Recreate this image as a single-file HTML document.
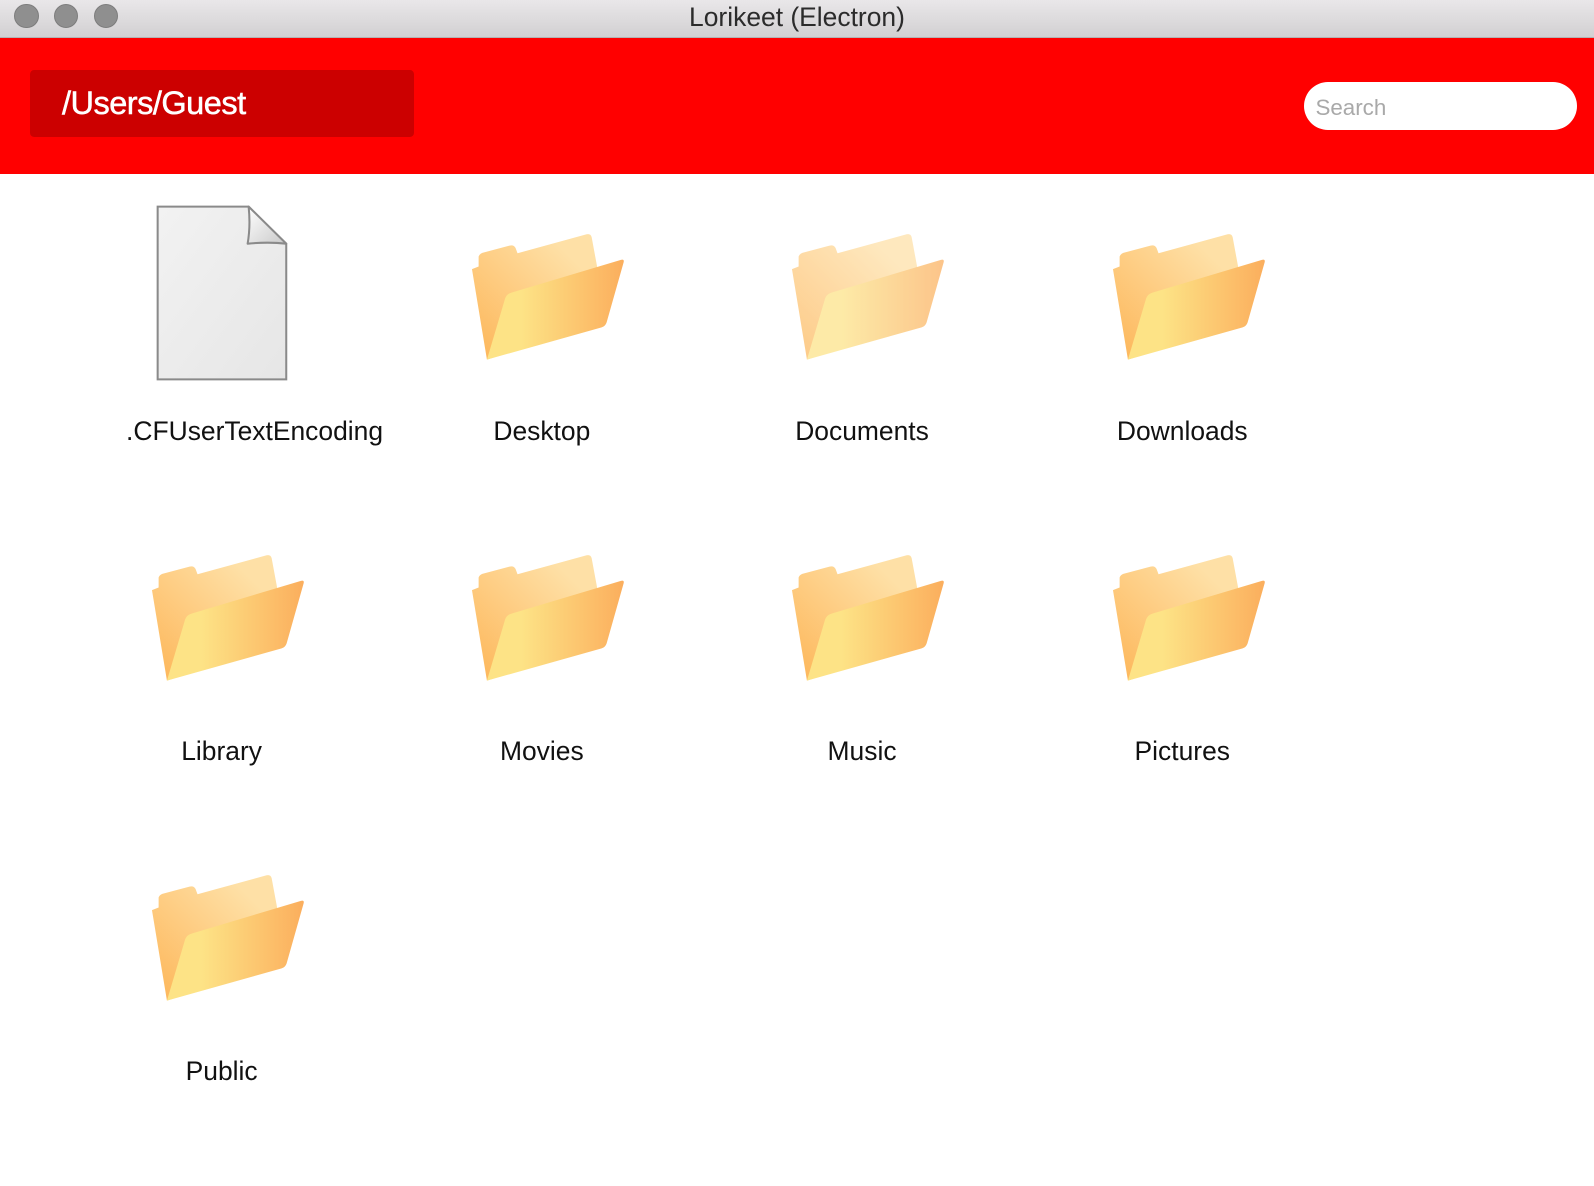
<!DOCTYPE html>
<html><head><meta charset="utf-8"><style>
html,body{margin:0;padding:0;background:#fff;overflow:hidden}
#w{zoom:1.01658;width:1568px;height:1167px;position:relative;font-family:"Liberation Sans",Arial,sans-serif}
.tb{position:absolute;left:0;top:0;width:1568px;height:36px;background:linear-gradient(#e9e7e9,#d2d0d2);border-bottom:1px solid #b3b3b3}
.tl{position:absolute;top:4px;width:24px;height:24px;border-radius:50%;background:#8f8f8f;border:1px solid #7d7d7d;box-sizing:border-box}
.title{position:absolute;left:0;width:1568px;top:2px;text-align:center;font-size:26px;color:#2b2b2b}
.hd{position:absolute;left:0;top:37px;width:1568px;height:134px;background:#ff0000}
.path{position:absolute;left:30px;top:32px;width:377px;height:66px;background:#cc0000;border-radius:4px;color:#fff;font-size:32px;line-height:66px;padding-left:31px;box-sizing:border-box;letter-spacing:-0.5px;-webkit-text-stroke:0.5px #fff}
.search{position:absolute;left:1283px;top:44px;width:268px;height:47px;background:#fff;border-radius:24px;color:#a9a9a9;font-size:22px;line-height:52px;padding-left:11px;box-sizing:border-box}
.lbl{position:absolute;width:300px;text-align:center;font-size:26px;color:#111}
.f{position:absolute;width:197px;height:157px}
</style></head><body><div id="w">
<div class="tb"><div class="tl" style="left:14px"></div><div class="tl" style="left:53px"></div><div class="tl" style="left:92px"></div><div class="title">Lorikeet (Electron)</div></div>
<div class="hd"><div class="path">/Users/Guest</div><div class="search">Search</div></div>

<svg width="0" height="0" style="position:absolute"><defs>
<linearGradient id="gb" x1="0" y1="1" x2="1" y2="0"><stop offset="0" stop-color="#fdb557"/><stop offset="0.8" stop-color="#fee0a6"/></linearGradient>
<linearGradient id="gf" x1="0" y1="0" x2="1" y2="0"><stop offset="0.25" stop-color="#fde386"/><stop offset="1" stop-color="#fbae5d"/></linearGradient>
<linearGradient id="gd" x1="0" y1="0" x2="1" y2="1"><stop offset="0" stop-color="#f2f2f2"/><stop offset="1" stop-color="#e6e6e6"/></linearGradient>
<linearGradient id="gc" x1="0" y1="0" x2="1" y2="1"><stop offset="0" stop-color="#ffffff"/><stop offset="1" stop-color="#c9c9c9"/></linearGradient>
<symbol id="fold" viewBox="0 0 600 480">
<path d="M95,178 L115,170 L115,140 Q118,132 126,129 L208,107 Q221,104 226,114 L232,130 L440,73 Q452,70 455,82 L475,190 L470,340 L140,450 Z" fill="url(#gb)"/>
<path d="M140,450 L195,265 Q200,252 215,248 L543,150 Q554,147 551,158 L500,338 Q496,350 485,353 Z" fill="url(#gf)"/>
</symbol></defs></svg>

<svg class="f" style="left:146px;top:198px;width:150px;height:185px" viewBox="0 0 150 185">
<path d="M9.5,5.5 L99,5.5 L136,42 L136,175.5 L9.5,175.5 Z" fill="url(#gd)" stroke="#8a8a8a" stroke-width="2"/>
<path d="M99,5.5 Q101,25 98,42 Q118,40 136,42 Z" fill="url(#gc)" stroke="#8a8a8a" stroke-width="2" stroke-linejoin="round"/>
</svg>

<svg class="f" style="left:433px;top:207px"><use href="#fold"/></svg>
<svg class="f" style="left:748px;top:207px;opacity:0.72"><use href="#fold"/></svg>
<svg class="f" style="left:1063px;top:207px"><use href="#fold"/></svg>
<svg class="f" style="left:118px;top:522px"><use href="#fold"/></svg>
<svg class="f" style="left:433px;top:522px"><use href="#fold"/></svg>
<svg class="f" style="left:748px;top:522px"><use href="#fold"/></svg>
<svg class="f" style="left:1063px;top:522px"><use href="#fold"/></svg>
<svg class="f" style="left:118px;top:837px"><use href="#fold"/></svg>

<div class="lbl" style="left:124px;top:409px;text-align:left">.CFUserTextEncoding</div>
<div class="lbl" style="left:383px;top:409px">Desktop</div>
<div class="lbl" style="left:698px;top:409px">Documents</div>
<div class="lbl" style="left:1013px;top:409px">Downloads</div>
<div class="lbl" style="left:68px;top:724px">Library</div>
<div class="lbl" style="left:383px;top:724px">Movies</div>
<div class="lbl" style="left:698px;top:724px">Music</div>
<div class="lbl" style="left:1013px;top:724px">Pictures</div>
<div class="lbl" style="left:68px;top:1039px">Public</div>
</div></body></html>
